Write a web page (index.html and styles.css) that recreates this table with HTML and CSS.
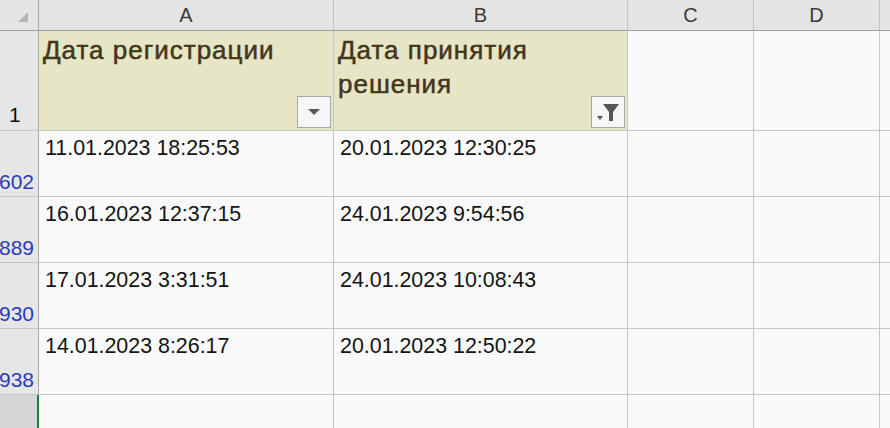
FILE: index.html
```html
<!DOCTYPE html>
<html lang="ru">
<head>
<meta charset="utf-8">
<link rel="stylesheet" href="styles.css">
</head>
<body>
<div class="sheet">
  <div class="ch corner"><span class="tri"></span></div>
  <div class="ch">A</div>
  <div class="ch">B</div>
  <div class="ch">C</div>
  <div class="ch">D</div>
  <div class="ch last"></div>

  <div class="rh first">1</div>
  <div class="cell head">Дата регистрации
    <span class="btn"><svg width="14" height="8" viewBox="0 0 14 8"><path d="M1 1h12L7 7z" fill="#5a5a5a"/></svg></span>
  </div>
  <div class="cell head">Дата принятия решения
    <span class="btn"><svg width="26" height="22" viewBox="0 0 26 22"><path d="M8 3h16l-6 8v9h-4v-9z" fill="#555"/><path d="M2 15h6l-3 4z" fill="#555"/></svg></span>
  </div>
  <div class="cell"></div>
  <div class="cell"></div>
  <div class="cell last"></div>

  <div class="rh"><span>602</span></div>
  <div class="cell">11.01.2023 18:25:53</div>
  <div class="cell">20.01.2023 12:30:25</div>
  <div class="cell"></div>
  <div class="cell"></div>
  <div class="cell last"></div>

  <div class="rh"><span>889</span></div>
  <div class="cell">16.01.2023 12:37:15</div>
  <div class="cell">24.01.2023 9:54:56</div>
  <div class="cell"></div>
  <div class="cell"></div>
  <div class="cell last"></div>

  <div class="rh"><span>930</span></div>
  <div class="cell">17.01.2023 3:31:51</div>
  <div class="cell">24.01.2023 10:08:43</div>
  <div class="cell"></div>
  <div class="cell"></div>
  <div class="cell last"></div>

  <div class="rh"><span>938</span></div>
  <div class="cell">14.01.2023 8:26:17</div>
  <div class="cell">20.01.2023 12:50:22</div>
  <div class="cell"></div>
  <div class="cell"></div>
  <div class="cell last"></div>

  <div class="rh sel"></div>
  <div class="cell"></div>
  <div class="cell"></div>
  <div class="cell"></div>
  <div class="cell"></div>
  <div class="cell last"></div>
</div>
</body>
</html>
```
FILE: styles.css
```css
html, body {
  margin: 0;
  padding: 0;
  background: #f9f9f9;
  overflow: hidden;
}
.sheet {
  display: grid;
  grid-template-columns: 39px 295px 294px 126px 126px 20px;
  grid-template-rows: 31px 100px 66px 66px 66px 66px 40px;
  width: 890px;
  height: 428px;
  overflow: hidden;
  font-family: "Liberation Sans", Arial, sans-serif;
}
.ch {
  background: #e4e4e4;
  border-right: 1px solid #c2c2c2;
  border-bottom: 1px solid #9e9e9e;
  color: #3a3a3a;
  font-size: 20px;
  display: flex;
  align-items: center;
  justify-content: center;
  padding-top: 1px;
}
.ch.corner {
  border-right-color: #a8a8a8;
  position: relative;
}
.tri {
  position: absolute;
  right: 10px;
  bottom: 8px;
  width: 0;
  height: 0;
  border-left: 10px solid transparent;
  border-bottom: 10px solid #b4b4b4;
}
.rh {
  background: #e6e6e6;
  border-right: 1px solid #a8a8a8;
  border-bottom: 1px solid #c6c6c6;
  color: #2a3bb8;
  font-size: 21px;
  display: flex;
  align-items: flex-end;
  justify-content: flex-end;
  padding-right: 4px;
  padding-bottom: 2px;
  overflow: hidden;
  white-space: nowrap;
}
.rh.first {
  color: #111;
  justify-content: flex-start;
  padding-left: 9px;
  padding-bottom: 3px;
}
.rh.sel {
  background: #d6d6d6;
  border-right: 2px solid #1f7a3a;
}
.cell {
  background: #f9f9f9;
  border-right: 1px solid #c6c6c6;
  border-bottom: 1px solid #c6c6c6;
  font-size: 21.4px;
  color: #141414;
  padding: 4px 0 0 6px;
  line-height: 26px;
  white-space: nowrap;
}
.cell.last, .ch.last {
  border-right: none;
}
.cell.head {
  background: #e6e5c6;
  color: #43351a;
  font-size: 26px;
  letter-spacing: 1px;
  line-height: 34px;
  padding: 2px 50px 0 4px;
  white-space: normal;
  position: relative;
  -webkit-text-stroke: 0.5px #43351a;
}
.btn {
  position: absolute;
  right: 2px;
  bottom: 2px;
  width: 32px;
  height: 30px;
  background: #f6f6f6;
  border: 1px solid #a6a6a6;
  display: flex;
  align-items: center;
  justify-content: center;
}
```
